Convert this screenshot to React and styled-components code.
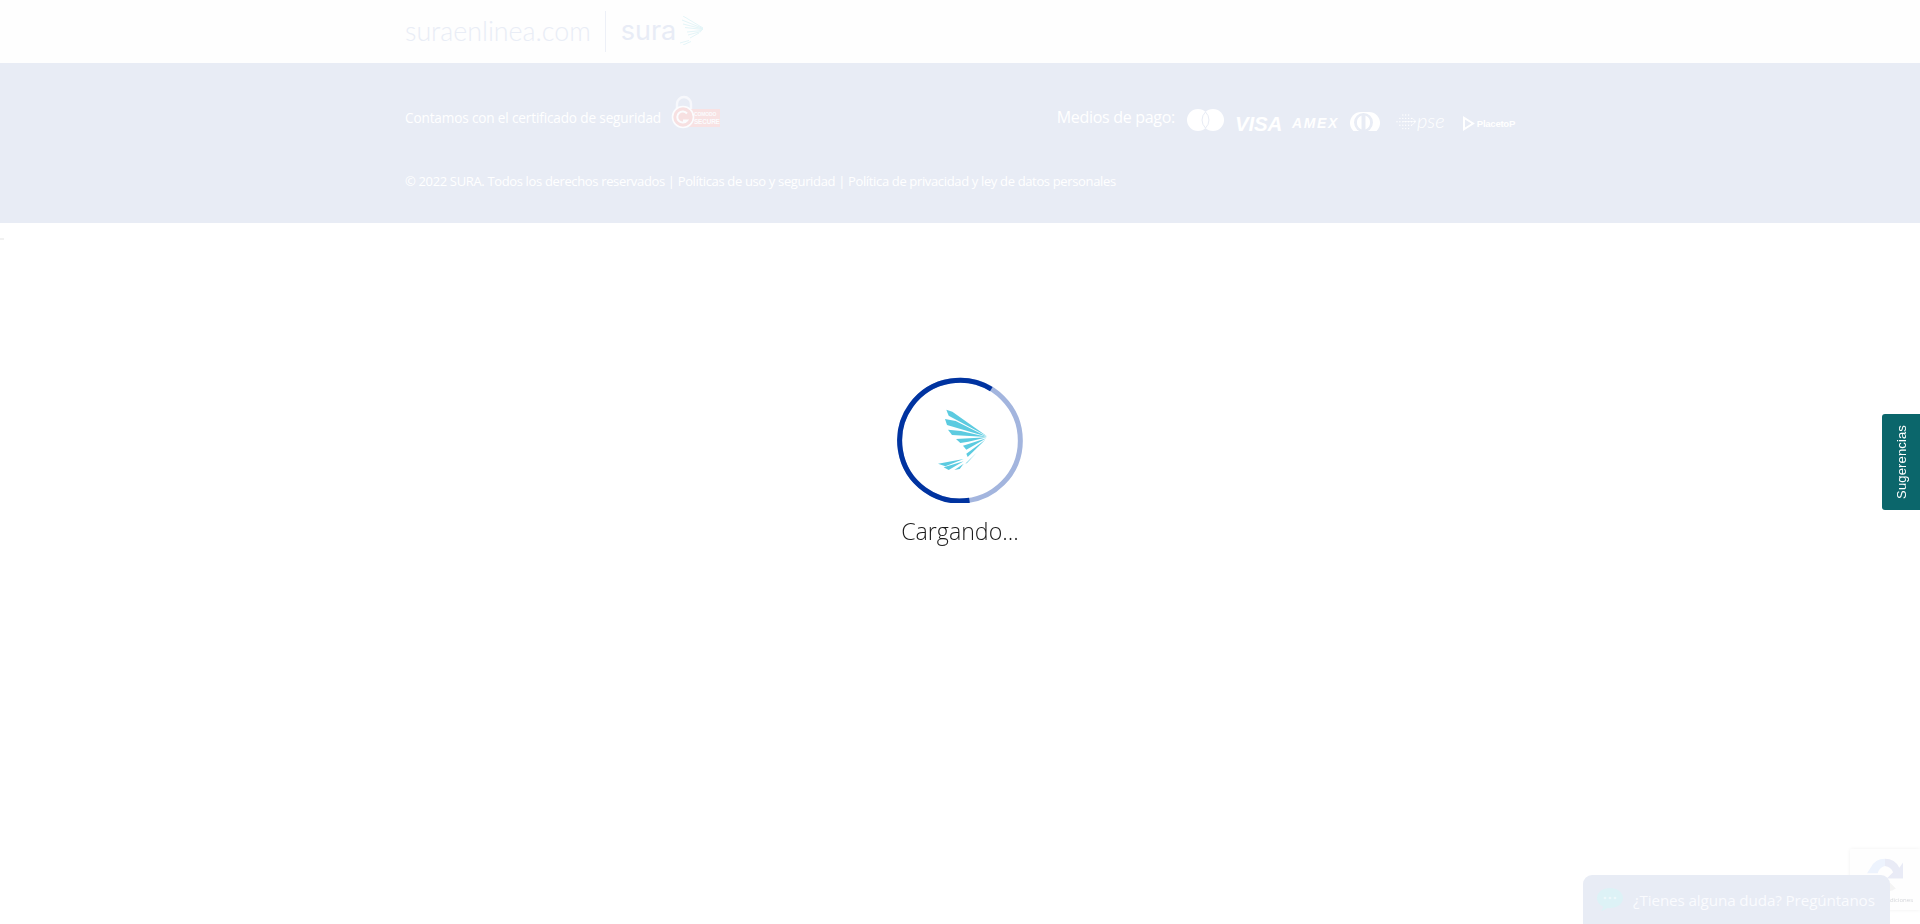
import React from "react";
import styled, { createGlobalStyle } from "styled-components";

const GlobalStyle = createGlobalStyle`
  html, body {
    margin: 0;
    padding: 0;
    height: 100%;
    overflow: hidden;
    background: #ffffff;
    font-family: "Open Sans", "Noto Sans", sans-serif;
  }
`;

const Header = styled.header`
  height: 63px;
  background: #fefefe;
`;

const Container = styled.div`
  width: 1110px;
  margin: 0 auto;
`;

const HeaderInner = styled(Container)`
  height: 100%;
  display: flex;
  align-items: center;
`;

const SiteName = styled.span`
  font-family: "Lato", sans-serif;
  font-weight: 300;
  font-size: 26.8px;
  color: #e9edf6;
  margin-bottom: 1px;
`;

const Divider = styled.span`
  width: 1px;
  height: 41px;
  background: #edf0f7;
  margin: 0 15px 0 14px;
`;

const Brand = styled.span`
  display: flex;
  align-items: center;
  gap: 4px;
  font-family: "Inter", sans-serif;
  font-weight: 400;
  font-size: 27px;
  line-height: 1;
  color: #e8ecf6;
  margin-bottom: 2px;
`;

const Band = styled.footer`
  height: 160px;
  background: #e8ecf5;
  color: #ffffff;
`;

const TopRow = styled(Container)`
  display: flex;
  justify-content: space-between;
  align-items: center;
  height: 108px;
`;

const Certificate = styled.div`
  display: flex;
  align-items: center;
  gap: 9px;
  font-size: 13.6px;
  letter-spacing: -0.15px;
`;

const BadgeIcon = styled.svg`
  display: block;
  margin-bottom: 10px;
`;

const Payments = styled.div`
  display: flex;
  align-items: center;
  gap: 12px;
`;

const PayLabel = styled.span`
  font-size: 16px;
  letter-spacing: -0.3px;
`;

const PayLogos = styled.div`
  display: flex;
  align-items: flex-end;
  gap: 11px;
  margin-top: 6px;
`;

const PayIcon = styled.svg`
  display: block;
  fill: #ffffff;
`;

const WordMark = styled.span`
  display: block;
  font-family: "Liberation Sans", Arial, sans-serif;
  font-weight: 700;
  font-style: italic;
  white-space: nowrap;
`;

const VisaMark = styled(WordMark)`
  width: 46px;
  font-size: 20.5px;
  line-height: 15px;
  letter-spacing: -0.2px;
`;

const AmexMark = styled(WordMark)`
  width: 47px;
  font-size: 14px;
  line-height: 11px;
  letter-spacing: 1.6px;
  margin-bottom: 2px;
`;

const PseLogo = styled.div`
  display: flex;
  align-items: flex-end;
  width: 53px;
  margin-left: 4px;
`;

const PseMark = styled.span`
  font-family: "Lato", sans-serif;
  font-weight: 300;
  font-style: italic;
  font-size: 20px;
  line-height: 15px;
  margin-bottom: 3px;
`;

const PlacetoLogo = styled.div`
  display: flex;
  align-items: center;
  gap: 2px;
  width: 52px;
  margin-left: 4px;
`;

const PlacetoMark = styled.span`
  font-family: "Liberation Sans", Arial, sans-serif;
  font-weight: 700;
  font-size: 9.6px;
  line-height: 15px;
  letter-spacing: -0.3px;
  white-space: nowrap;
`;

const Legal = styled(Container)`
  font-size: 13px;
  line-height: 18px;
  letter-spacing: -0.35px;
  padding-top: 1px;
`;

const Tick = styled.span`
  position: fixed;
  left: 0;
  top: 238px;
  width: 4px;
  height: 2px;
  background: #f1f1f1;
`;

const LoaderOverlay = styled.div`
  position: fixed;
  left: 0;
  right: 0;
  top: 371px;
  display: flex;
  flex-direction: column;
  align-items: center;
`;

const LoaderText = styled.div`
  font-size: 23.2px;
  font-weight: 300;
  line-height: 32px;
  margin-top: 12px;
  color: #1c1c1c;
`;

const Suggestions = styled.button`
  position: fixed;
  right: 0;
  top: 414px;
  width: 38px;
  height: 96px;
  padding: 0;
  border: none;
  border-radius: 3px 0 0 3px;
  background: #0b666b;
  color: #ffffff;
  font-family: "Liberation Sans", Arial, sans-serif;
  font-size: 13px;
  letter-spacing: 0.15px;
  display: flex;
  align-items: center;
  justify-content: center;
`;

const SuggestionsLabel = styled.span`
  writing-mode: vertical-rl;
  transform: rotate(180deg);
`;

const Recaptcha = styled.div`
  position: fixed;
  right: 0;
  top: 849px;
  width: 70px;
  height: 61px;
  background: #fefefe;
  border-radius: 2px 0 0 2px;
  box-shadow: 0 0 4px rgba(0, 0, 0, 0.06);
  display: flex;
  flex-direction: column;
  padding: 8px 7px 0 17px;
  box-sizing: border-box;
`;

const RecaptchaTerms = styled.span`
  align-self: flex-end;
  white-space: nowrap;
  font-size: 6px;
  line-height: 8px;
  margin-top: 3px;
  color: #d4d6da;
`;

const ChatCard = styled.div`
  position: fixed;
  left: 1583px;
  bottom: 0;
  width: 307px;
  height: 49px;
  box-sizing: border-box;
  padding: 0 0 0 14px;
  background: #e8ecf5;
  border-radius: 9px 9px 0 0;
  color: #fafbfe;
  font-size: 15.2px;
  letter-spacing: -0.1px;
  white-space: nowrap;
  display: flex;
  align-items: center;
  gap: 10px;
`;

function SpinnerWings() {
  const wings = [
    "M198 150 L216 156 L320 230 L205 168 Z",
    "M194 178 L226 184 L320 231 L200 196 Z",
    "M203 210 L242 214 L320 232 L215 226 Z",
    "M227 238 L320 233 L264 246 L240 250 Z",
    "M248 258 L318 236 L258 270 Z",
    "M258 282 L315 240 L262 292 Z",
    "M255 312 L290 278 L260 310 Z",
    "M173 312 L250 298 L195 320 Z",
    "M190 323 L250 305 L205 331 Z",
    "M222 331 L250 312 L238 328 Z",
  ];
  return (
    <svg width="132" height="132" viewBox="41 34 396 396">
      <circle cx="239" cy="243" r="181" fill="none" stroke="#a3b5de" strokeWidth="15" />
      <circle
        cx="239"
        cy="243"
        r="181"
        fill="none"
        stroke="#0033a0"
        strokeWidth="15"
        pathLength="360"
        strokeDasharray="220 140"
        transform="rotate(81 239 243)"
      />
      {wings.map((d) => (
        <path key={d} d={d} fill="#5ccbe0" />
      ))}
    </svg>
  );
}

function BrandWings() {
  return (
    <svg width="24" height="29" viewBox="0 0 24 29" fill="none" stroke="#e4f5f8" strokeWidth="1">
      <path d="M3 0 L23 12 M2 4 L23 12.500 M3 8 L23 13 M5 11.500 L23 13.500 M7 16 L22 14.500 M8 19 L21 15.500 M10 22 L19 17" />
      <path d="M0 27 L9 24.500 M3 29 L11 25.500" />
    </svg>
  );
}

function ComodoBadge() {
  return (
    <BadgeIcon width="50" height="34" viewBox="0 0 50 34">
      <rect x="18" y="14" width="32" height="18" fill="#f8e2e3" />
      <path d="M7 14 V9 a7 7 0 0 1 14 0 V14" fill="none" stroke="#f7f8fc" strokeWidth="2.4" />
      <circle cx="13" cy="22" r="10.5" fill="#f7e0e1" stroke="#fbfcfe" strokeWidth="1.6" />
      <path d="M17 18.500 a5.500 5.500 0 1 0 0 7 H13" fill="none" stroke="#fbfcfe" strokeWidth="2" />
      <text x="24" y="21" fontSize="5" fontWeight="700" fill="#fbfcfe" fontFamily="Liberation Sans">COMODO</text>
      <text x="24" y="29" fontSize="6.4" fontWeight="700" fill="#fbfcfe" fontFamily="Liberation Sans">SECURE</text>
    </BadgeIcon>
  );
}

function MasterLogo() {
  return (
    <PayIcon width="37" height="22" viewBox="0 0 37 22">
      <circle cx="11" cy="11" r="11" />
      <circle cx="26" cy="11" r="11" />
      <path d="M18.500 3 a11 11 0 0 0 0 16 a11 11 0 0 0 0 -16 Z" fill="none" stroke="#e8ecf5" strokeWidth="1" />
    </PayIcon>
  );
}

function DinersLogo() {
  return (
    <PayIcon width="30" height="19" viewBox="0 0 30 19">
      <rect x="0" y="0" width="30" height="22" rx="11" />
      <circle cx="13.500" cy="10.500" r="9.500" fill="#e8ecf5" />
      <path d="M11.500 3.600 V17.400 A7.500 7.500 0 0 1 11.500 3.600 Z M15.500 3.600 A7.500 7.500 0 0 1 15.500 17.400 Z" />
    </PayIcon>
  );
}

function PseDots() {
  const dots = [];
  for (let row = 0; row < 5; row++) {
    for (let col = Math.abs(2 - row); col < 7 - Math.abs(2 - row); col++) {
      dots.push(<circle key={`${row}-${col}`} cx={2 + col * 2.9} cy={2 + row * 3.4} r="0.7" />);
    }
  }
  return (
    <PayIcon width="22" height="18" viewBox="0 0 22 18">
      {dots}
      <path d="M8 8.500 H21 L17 5 M21 8.500 L17 12" fill="none" stroke="#ffffff" strokeWidth="0.6" />
    </PayIcon>
  );
}

function PlacetoArrow() {
  return (
    <PayIcon width="12" height="15" viewBox="0 0 12 15">
      <path d="M0 0 L12 7.500 L0 15 Z M2 3.500 V11.500 L8.500 7.500 Z" fillRule="evenodd" />
    </PayIcon>
  );
}

function ChatBubble() {
  return (
    <svg width="26" height="24" viewBox="0 0 26 24">
      <path d="M13 0 C20 0 26 4 26 10 C26 16 20 20 13 20 C12 20 11 20 10 20 C8 22 6 23 4 23 C5.500 21.500 6 20 6 18.500 C2.500 17 0 14 0 10 C0 4 6 0 13 0 Z" fill="#ddf2f6" />
      <circle cx="8" cy="10" r="1.300" fill="#eef8fa" />
      <circle cx="13" cy="10" r="1.300" fill="#eef8fa" />
      <circle cx="18" cy="10" r="1.300" fill="#eef8fa" />
    </svg>
  );
}

function RecaptchaIcon() {
  return (
    <svg width="36" height="36" viewBox="0 0 40 40">
      <path d="M20 2 A18 18 0 0 1 36 12 L40 6 V24 H22 L29 17 A11 11 0 0 0 20 10 Z" fill="#e9ebf6" />
      <path d="M20 2 A18 18 0 0 0 4 12 L0 18 H12 A11 11 0 0 1 20 10 Z" fill="#edf3fd" />
      <path d="M4 24 H18 L12 31 A11 11 0 0 0 26 29 L32 35 A18 18 0 0 1 4 24 Z" fill="#f4f4f4" />
    </svg>
  );
}

export default function App() {
  return (
    <>
      <GlobalStyle />
      <Header>
        <HeaderInner>
          <SiteName>suraenlinea.com</SiteName>
          <Divider />
          <Brand>
            sura
            <BrandWings />
          </Brand>
        </HeaderInner>
      </Header>
      <Band>
        <TopRow>
          <Certificate>
            Contamos con el certificado de seguridad
            <ComodoBadge />
          </Certificate>
          <Payments>
            <PayLabel>Medios de pago:</PayLabel>
            <PayLogos>
              <MasterLogo />
              <VisaMark>VISA</VisaMark>
              <AmexMark>AMEX</AmexMark>
              <DinersLogo />
              <PseLogo>
                <PseDots />
                <PseMark>pse</PseMark>
              </PseLogo>
              <PlacetoLogo>
                <PlacetoArrow />
                <PlacetoMark>PlacetoP</PlacetoMark>
              </PlacetoLogo>
            </PayLogos>
          </Payments>
        </TopRow>
        <Legal>© 2022 SURA. Todos los derechos reservados | Políticas de uso y seguridad | Política de privacidad y ley de datos personales</Legal>
      </Band>
      <Tick />
      <LoaderOverlay>
        <SpinnerWings />
        <LoaderText>Cargando...</LoaderText>
      </LoaderOverlay>
      <Suggestions>
        <SuggestionsLabel>Sugerencias</SuggestionsLabel>
      </Suggestions>
      <Recaptcha>
        <RecaptchaIcon />
        <RecaptchaTerms>Condiciones</RecaptchaTerms>
      </Recaptcha>
      <ChatCard>
        <ChatBubble />
        ¿Tienes alguna duda? Pregúntanos
      </ChatCard>
    </>
  );
}
